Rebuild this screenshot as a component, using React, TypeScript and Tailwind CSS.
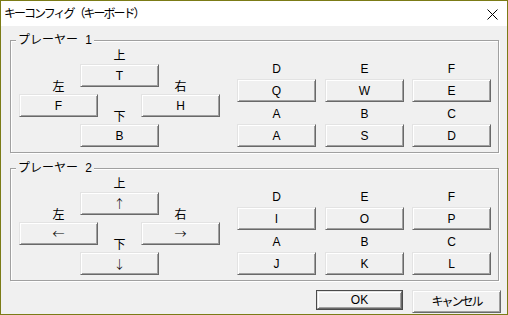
import { ReactNode } from "react";

const KeyButton = ({
  children,
  className = "",
}: {
  children: ReactNode;
  className?: string;
}) => (
  <div
    className={`flex items-center justify-center h-[23px] bg-[#f0f0f0] border border-t-[#e3e3e3] border-l-[#e3e3e3] border-r-[#696969] border-b-[#696969] shadow-[inset_1px_1px_0_#ffffff,inset_-1px_-1px_0_#a0a0a0] text-[12px] leading-[12px] text-black ${className}`}
  >
    {children}
  </div>
);

const Arrow = ({ ch }: { ch: string }) => (
  <span className="font-['Noto_Sans_CJK_JP',sans-serif] text-[12px] leading-[12px] font-light">{ch}</span>
);

type Player = {
  title: string;
  up: ReactNode;
  left: ReactNode;
  right: ReactNode;
  down: ReactNode;
  keys: { label: string; key: string }[][];
};

const players: Player[] = [
  {
    title: "プレーヤー 1",
    up: "T",
    left: "F",
    right: "H",
    down: "B",
    keys: [
      [
        { label: "D", key: "Q" },
        { label: "A", key: "A" },
      ],
      [
        { label: "E", key: "W" },
        { label: "B", key: "S" },
      ],
      [
        { label: "F", key: "E" },
        { label: "C", key: "D" },
      ],
    ],
  },
  {
    title: "プレーヤー 2",
    up: <Arrow ch="↑" />,
    left: <Arrow ch="←" />,
    right: <Arrow ch="→" />,
    down: <Arrow ch="↓" />,
    keys: [
      [
        { label: "D", key: "I" },
        { label: "A", key: "J" },
      ],
      [
        { label: "E", key: "O" },
        { label: "B", key: "K" },
      ],
      [
        { label: "F", key: "P" },
        { label: "C", key: "L" },
      ],
    ],
  },
];

const PlayerGroup = ({ p, className = "" }: { p: Player; className?: string }) => (
  <div
    className={`relative w-[489px] h-[113px] border border-[#a0a0a0] shadow-[1px_1px_0_#ffffff,inset_1px_1px_0_#ffffff] pl-[8px] pt-[7px] flex ${className}`}
  >
    {/* legend */}
    <div className="absolute left-[5px] -top-[7px] px-[2px] bg-[#f0f0f0] text-[12px] leading-[12px] whitespace-pre [word-spacing:4px]">
      {p.title}
    </div>

    {/* direction pad */}
    <div className="grid grid-cols-[61px_18px_43px_18px_61px] grid-rows-[16px_16px_7px_7px_16px_7px_7px_23px] w-[201px]">
      <div className="col-start-2 col-end-5 row-start-1 row-end-2 flex items-center justify-center text-[12px] leading-[12px]">
        上
      </div>
      <KeyButton className="col-start-2 col-end-5 row-start-2 row-end-4">{p.up}</KeyButton>
      <div className="col-start-1 col-end-3 row-start-3 row-end-5 flex items-center justify-center text-[12px] leading-[12px]">
        左
      </div>
      <div className="col-start-4 col-end-6 row-start-3 row-end-5 flex items-center justify-center text-[12px] leading-[12px]">
        右
      </div>
      <KeyButton className="col-start-1 col-end-3 row-start-5 row-end-7">{p.left}</KeyButton>
      <KeyButton className="col-start-4 col-end-6 row-start-5 row-end-7">{p.right}</KeyButton>
      <div className="col-start-2 col-end-5 row-start-6 row-end-8 flex items-center justify-center text-[12px] leading-[12px]">
        下
      </div>
      <KeyButton className="col-start-2 col-end-5 row-start-8 row-end-9">{p.down}</KeyButton>
    </div>

    {/* buttons A-F */}
    <div className="ml-[17px] mt-[15px] grid grid-cols-[88px_87px_79px]">
      {p.keys.map((col, i) => (
        <div key={i} className="flex flex-col w-[79px]">
          <div className="h-[12px] leading-[12px] text-[12px] text-center">{col[0].label}</div>
          <KeyButton className="mt-[4px]">{col[0].key}</KeyButton>
          <div className="mt-[6px] h-[12px] leading-[12px] text-[12px] text-center">{col[1].label}</div>
          <KeyButton className="mt-[4px]">{col[1].key}</KeyButton>
        </div>
      ))}
    </div>
  </div>
);

export default function App() {
  return (
    <div
      className="w-[508px] h-[315px] border border-[#7b7b16] flex flex-col bg-[#f0f0f0] text-black"
      style={{ fontFamily: '"Liberation Sans", "Noto Sans CJK JP", sans-serif' }}
    >
      {/* Title bar */}
      <div className="h-[25px] bg-white flex items-center justify-between pl-[3px] pr-[9px]">
        <span className="text-[12px] tracking-[-2px] leading-[12px]">キーコンフィグ（キーボード）</span>
        <svg width="11" height="11" viewBox="0 0 11 11" className="mt-[1px]">
          <path d="M0.5 0.5 L10.5 10.5 M10.5 0.5 L0.5 10.5" stroke="#000" strokeWidth="1" />
        </svg>
      </div>

      {/* Body */}
      <div className="flex-1 pl-[9px] pt-[14px] flex flex-col">
        <PlayerGroup p={players[0]} />
        <PlayerGroup p={players[1]} className="mt-[15px]" />

        <div className="mt-[9px] pl-[306px] flex gap-[9px]">
          <div className="w-[87px] h-[20px] border border-[#4a4a4a] flex">
            <KeyButton className="flex-1 h-full">OK</KeyButton>
          </div>
          <KeyButton className="w-[89px] h-[20px]">
            <span className="tracking-[-2px]">キャンセル</span>
          </KeyButton>
        </div>
      </div>
    </div>
  );
}
